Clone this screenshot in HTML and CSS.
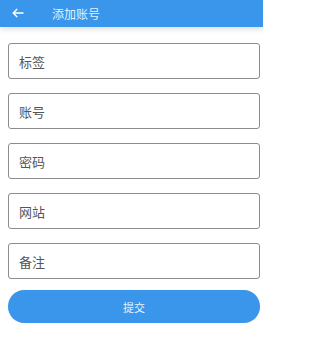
FILE: index.html
```html
<!DOCTYPE html>
<html lang="zh">
<head>
<meta charset="utf-8">
<link rel="stylesheet" href="styles.css">
</head>
<body>
<header class="bar">
  <svg class="back" width="12" height="10" viewBox="0 0 12 10"><path d="M11.5 5H1.2M5.2 1L1.2 5l4 4" fill="none" stroke="#fff" stroke-width="1.4"/></svg>
  <span class="title">添加账号</span>
</header>
<main class="form">
  <div class="field">标签</div>
  <div class="field">账号</div>
  <div class="field">密码</div>
  <div class="field">网站</div>
  <div class="field">备注</div>
  <button class="submit">提交</button>
</main>
</body>
</html>
```
FILE: styles.css
```css
html, body { margin: 0; padding: 0; background: #fff; }
body { font-family: "Noto Sans CJK SC", "Noto Sans", sans-serif; width: 263px; }
.bar {
  height: 27px;
  background: #3a96eb;
  display: flex;
  align-items: center;
  box-shadow: 0 2px 6px rgba(0,0,0,0.14);
  position: relative;
}
.back { margin-left: 12px; margin-top: -2px; }
.title { margin-left: 28px; color: rgba(255,255,255,0.88); font-size: 12px; margin-top: -1px; }
.form {
  padding: 16px 3px 0 8px;
  display: flex;
  flex-direction: column;
  gap: 14px;
}
.field {
  height: 34px;
  border: 1px solid #8c8c8c;
  border-radius: 3px;
  display: flex;
  align-items: center;
  padding-left: 10px;
  font-size: 13px;
  color: #555;
}
.submit {
  margin-top: -3px;
  height: 33px;
  border: none;
  border-radius: 17px;
  background: #3a96eb;
  color: rgba(255,255,255,0.92);
  font-family: inherit;
  font-size: 11px;
  box-shadow: 0 0 1px rgba(0,0,0,0.2);
}
```
